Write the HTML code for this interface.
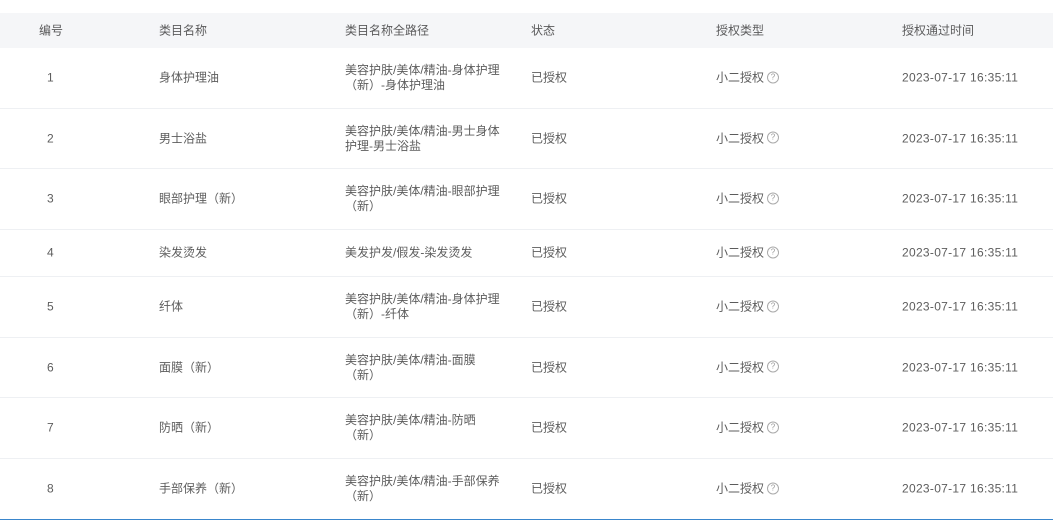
<!DOCTYPE html>
<html><head><meta charset="utf-8"><style>
body{margin:0;width:1053px;height:520px;background:#fff;overflow:hidden;font-family:"Liberation Sans","Noto Sans CJK SC",sans-serif;font-size:12px;color:#333c;position:relative}
.hd{position:absolute;top:13px;left:0;width:1053px;height:35px;background:#f5f6f8}
.row{position:absolute;left:0;width:1053px;border-bottom:1px solid #eef0f3}
.c{position:absolute;top:50%;transform:translateY(-50%);line-height:15px}
.t{letter-spacing:0.3px}
.q{display:inline-block;width:10px;height:10px;border:1px solid #aaa;border-radius:50%;font-size:8px;line-height:10px;text-align:center;color:#999;vertical-align:middle;margin-left:3px;position:relative;top:-1px}
</style></head><body>
<div class="hd">
<div class="c" style="left:39px">编号</div>
<div class="c" style="left:159px">类目名称</div>
<div class="c" style="left:345px">类目名称全路径</div>
<div class="c" style="left:531px">状态</div>
<div class="c" style="left:716px">授权类型</div>
<div class="c" style="left:902px">授权通过时间</div>
</div>
<div class="row" style="top:48px;height:60px">
<div class="c" style="left:47px">1</div><div class="c" style="left:159px">身体护理油</div>
<div class="c" style="left:345px;width:170px">美容护肤/美体/精油-身体护理<br>（新）-身体护理油</div>
<div class="c" style="left:531px">已授权</div><div class="c" style="left:716px">小二授权<span class="q">?</span></div><div class="c t" style="left:902px">2023-07-17 16:35:11</div></div>
<div class="row" style="top:109px;height:59px">
<div class="c" style="left:47px">2</div><div class="c" style="left:159px">男士浴盐</div>
<div class="c" style="left:345px">美容护肤/美体/精油-男士身体<br>护理-男士浴盐</div>
<div class="c" style="left:531px">已授权</div><div class="c" style="left:716px">小二授权<span class="q">?</span></div><div class="c t" style="left:902px">2023-07-17 16:35:11</div></div>
<div class="row" style="top:169px;height:60px">
<div class="c" style="left:47px">3</div><div class="c" style="left:159px">眼部护理（新）</div>
<div class="c" style="left:345px">美容护肤/美体/精油-眼部护理<br>（新）</div>
<div class="c" style="left:531px">已授权</div><div class="c" style="left:716px">小二授权<span class="q">?</span></div><div class="c t" style="left:902px">2023-07-17 16:35:11</div></div>
<div class="row" style="top:230px;height:46px">
<div class="c" style="left:47px">4</div><div class="c" style="left:159px">染发烫发</div>
<div class="c" style="left:345px">美发护发/假发-染发烫发</div>
<div class="c" style="left:531px">已授权</div><div class="c" style="left:716px">小二授权<span class="q">?</span></div><div class="c t" style="left:902px">2023-07-17 16:35:11</div></div>
<div class="row" style="top:277px;height:60px">
<div class="c" style="left:47px">5</div><div class="c" style="left:159px">纤体</div>
<div class="c" style="left:345px">美容护肤/美体/精油-身体护理<br>（新）-纤体</div>
<div class="c" style="left:531px">已授权</div><div class="c" style="left:716px">小二授权<span class="q">?</span></div><div class="c t" style="left:902px">2023-07-17 16:35:11</div></div>
<div class="row" style="top:338px;height:59px">
<div class="c" style="left:47px">6</div><div class="c" style="left:159px">面膜（新）</div>
<div class="c" style="left:345px">美容护肤/美体/精油-面膜<br>（新）</div>
<div class="c" style="left:531px">已授权</div><div class="c" style="left:716px">小二授权<span class="q">?</span></div><div class="c t" style="left:902px">2023-07-17 16:35:11</div></div>
<div class="row" style="top:398px;height:60px">
<div class="c" style="left:47px">7</div><div class="c" style="left:159px">防晒（新）</div>
<div class="c" style="left:345px">美容护肤/美体/精油-防晒<br>（新）</div>
<div class="c" style="left:531px">已授权</div><div class="c" style="left:716px">小二授权<span class="q">?</span></div><div class="c t" style="left:902px">2023-07-17 16:35:11</div></div>
<div class="row" style="top:459px;height:60px;border-bottom:1px solid #3a86cc">
<div class="c" style="left:47px">8</div><div class="c" style="left:159px">手部保养（新）</div>
<div class="c" style="left:345px">美容护肤/美体/精油-手部保养<br>（新）</div>
<div class="c" style="left:531px">已授权</div><div class="c" style="left:716px">小二授权<span class="q">?</span></div><div class="c t" style="left:902px">2023-07-17 16:35:11</div></div>
</body></html>
